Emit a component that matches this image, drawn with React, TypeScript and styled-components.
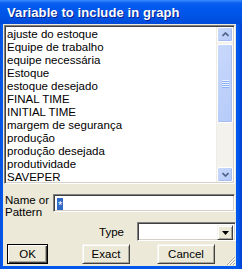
import React from "react";
import styled, { createGlobalStyle } from "styled-components";

const GlobalStyle = createGlobalStyle`
  html, body {
    margin: 0;
    padding: 0;
    background: #0055e5;
  }
  body {
    font-family: "Liberation Sans", Arial, sans-serif;
  }
`;

const SWindow = styled.div`
  width: 242px;
  height: 269px;
  display: flex;
  flex-direction: column;
  background: linear-gradient(90deg, #0a4fd8 0, #0058ee 2px, #0058ee 238px, #003fcf 242px);
  overflow: hidden;
`;

const STitleBar = styled.div`
  height: 24px;
  flex: none;
  display: flex;
  align-items: center;
  padding-left: 7px;
  background: linear-gradient(
    180deg,
    #3b8cff 0,
    #0a5ff0 3px,
    #0058ee 8px,
    #0054e6 16px,
    #004ad9 24px
  );
  color: #fff;
  font-size: 13px;
  font-weight: bold;
  letter-spacing: 0.1px;
  text-shadow: 1px 1px 0 #0a1f8f;
`;

const SClient = styled.div`
  flex: 1;
  margin: 0 6px 3px 3px;
  background: #ece9d8;
  display: flex;
  flex-direction: column;
  position: relative;
`;

const SSunken = styled.div`
  box-sizing: border-box;
  background: #fff;
  border-top: 1px solid #808080;
  border-left: 1px solid #808080;
  border-right: 1px solid #fff;
  border-bottom: 1px solid #fff;
  box-shadow: inset 1px 1px 0 #404040, inset -1px -1px 0 #d4d0c8;
`;

const SListBox = styled(SSunken)`
  margin: 1px 0 0 1px;
  width: 231px;
  height: 159px;
  flex: none;
  display: flex;
`;

const SList = styled.div`
  flex: 1;
  padding: 2px 0 0 2px;
  overflow: hidden;
`;

const SItem = styled.div`
  height: 13px;
  line-height: 13px;
  font-size: 11.5px;
  color: #000;
  white-space: nowrap;
`;

const SScrollBar = styled.div`
  width: 16px;
  margin: 1px 1px 1px 0;
  display: flex;
  flex-direction: column;
  background: #f4f2ec;
  border-left: 1px solid #eeede5;
`;

const SScrollButton = styled.div`
  height: 15px;
  flex: none;
  box-sizing: border-box;
  border: 1px solid #fff;
  border-radius: 2px;
  background: linear-gradient(135deg, #c9d8fc 0, #b5cbf9 100%);
  box-shadow: inset -1px -1px 0 #a6bdf0;
  display: flex;
  align-items: center;
  justify-content: center;
`;

const SThumb = styled(SScrollButton)<{ $height: number }>`
  height: ${({ $height }) => $height}px;
  margin-top: 2px;
  flex-direction: column;
  gap: 1px;
`;

const SGrip = styled.div`
  width: 7px;
  height: 1px;
  background: #eef4fe;
  box-shadow: 0 1px 0 #8cb0f8;
`;

const STrack = styled.div`
  flex: 1;
`;

const SForm = styled.div`
  display: grid;
  grid-template-columns: 48px 1fr;
  margin-top: 10px;
  padding-left: 2px;
`;

const SLabel = styled.div`
  font-size: 11.5px;
  line-height: 12px;
  color: #000;
`;

const SInput = styled(SSunken)`
  height: 18px;
  width: 182px;
  padding: 3px 0 0 3px;
  font-size: 11px;
  line-height: 11px;
`;

const SSelected = styled.span`
  display: inline-block;
  background: #316ac5;
  color: #fff;
  padding: 0 1px;
  height: 12px;
  line-height: 14px;
`;

const STypeRow = styled.div`
  display: flex;
  align-items: center;
  margin-top: 4px;
  padding-left: 96px;
  gap: 13px;
`;

const SCombo = styled(SSunken)`
  width: 101px;
  height: 19px;
  display: flex;
  justify-content: flex-end;
  padding: 2px;
`;

const SRaised = styled.div`
  box-sizing: border-box;
  background: #ece9d8;
  border-top: 1px solid #f4f3ee;
  border-left: 1px solid #f4f3ee;
  border-right: 1px solid #404040;
  border-bottom: 1px solid #404040;
  box-shadow: inset 1px 1px 0 #fff, inset -1px -1px 0 #aca899;
`;

const SDropButton = styled(SRaised)`
  width: 16px;
  height: 15px;
  display: flex;
  align-items: center;
  justify-content: center;
`;

const SButtons = styled.div`
  display: flex;
  margin-top: 3px;
  padding-left: 4px;
`;

const SButton = styled(SRaised)<{ $width: number; $gap: number; $default?: boolean }>`
  width: ${({ $width }) => $width}px;
  height: 20px;
  margin-left: ${({ $gap }) => $gap}px;
  display: flex;
  align-items: center;
  justify-content: center;
  font-size: 11.5px;
  color: #000;
  ${({ $default }) =>
    $default
      ? `border: 1px solid #000; box-shadow: inset 1px 1px 0 #fff, inset -1px -1px 0 #404040, inset -2px -2px 0 #aca899;`
      : ""}
`;

const SGripCorner = styled.svg`
  position: absolute;
  right: 0;
  bottom: 0;
`;

const items = [
  "ajuste do estoque",
  "Equipe de trabalho",
  "equipe necessária",
  "Estoque",
  "estoque desejado",
  "FINAL TIME",
  "INITIAL TIME",
  "margem de segurança",
  "produção",
  "produção desejada",
  "produtividade",
  "SAVEPER",
];

const Arrow = ({ up }: { up?: boolean }) => (
  <svg width="7" height="5" viewBox="0 0 7 5">
    <path
      d={up ? "M0.5 4 L3.5 1 L6.5 4" : "M0.5 1 L3.5 4 L6.5 1"}
      stroke="#4d6185"
      strokeWidth="1.6"
      fill="none"
    />
  </svg>
);

export default function App() {
  return (
    <>
      <GlobalStyle />
      <SWindow>
        <STitleBar>Variable to include in graph</STitleBar>
        <SClient>
          <SListBox>
            <SList>
              {items.map((it) => (
                <SItem key={it}>{it}</SItem>
              ))}
            </SList>
            <SScrollBar>
              <SScrollButton>
                <Arrow up />
              </SScrollButton>
              <SThumb $height={79}>
                <SGrip />
                <SGrip />
                <SGrip />
                <SGrip />
              </SThumb>
              <STrack />
              <SScrollButton>
                <Arrow />
              </SScrollButton>
            </SScrollBar>
          </SListBox>
          <SForm>
            <SLabel>
              Name or
              <br />
              Pattern
            </SLabel>
            <SInput>
              <SSelected>*</SSelected>
            </SInput>
          </SForm>
          <STypeRow>
            <SLabel>Type</SLabel>
            <SCombo>
              <SDropButton>
                <svg width="7" height="4" viewBox="0 0 7 4">
                  <path d="M0 0 H7 L3.5 4 Z" fill="#000" />
                </svg>
              </SDropButton>
            </SCombo>
          </STypeRow>
          <SButtons>
            <SButton $width={41} $gap={0} $default>
              OK
            </SButton>
            <SButton $width={48} $gap={34}>
              Exact
            </SButton>
            <SButton $width={58} $gap={27}>
              Cancel
            </SButton>
          </SButtons>
          <SGripCorner width="12" height="12" viewBox="0 0 12 12">
            <path d="M11 3 L3 11 M11 6 L6 11 M11 9 L9 11" stroke="#aca899" strokeWidth="1" />
            <path d="M11 4 L4 11 M11 7 L7 11 M11 10 L10 11" stroke="#fff" strokeWidth="1" />
          </SGripCorner>
        </SClient>
      </SWindow>
    </>
  );
}
